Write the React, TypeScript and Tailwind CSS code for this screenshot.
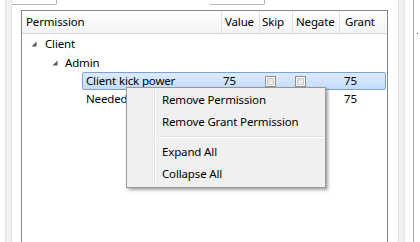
import React from "react";

const font = { fontFamily: '"Noto Sans", "Open Sans", sans-serif' };

function Tri() {
  return (
    <svg width="6" height="6" viewBox="0 0 6 6" className="shrink-0">
      <polygon points="0.5,5.5 5.5,5.5 5.5,0.5" fill="#5a5a5a" />
    </svg>
  );
}

function Check() {
  return (
    <div className="w-[11px] h-[11px] border border-[#8f8f8f] bg-white p-[1px]">
      <div className="w-full h-full bg-gradient-to-br from-[#dcdcdc] to-[#f6f6f6] border border-[#c8c8c8]" />
    </div>
  );
}

export default function App() {
  return (
    <div
      className="w-[420px] h-[242px] overflow-hidden bg-white flex text-[11.5px] tracking-[-0.15px] text-black relative"
      style={font}
    >
      {/* left strip */}
      <div className="w-[5px] shrink-0" />
      <div className="w-[7px] shrink-0 bg-[#f0f0f0] border-l border-r border-[#e4e4e4]" />
      {/* center */}
      <div className="w-[386px] shrink-0 flex flex-col">
        <div className="h-[10px] flex items-start shrink-0">
          <div className="w-[45px] h-[5px] border-b border-r border-[#b5b5b5] rounded-br-[2px]" />
          <div className="ml-[153px] w-[55px] h-[5px] border-b border-r border-[#b5b5b5] rounded-br-[2px]" />
        </div>
        <div className="ml-[9px] w-[367px] flex-1 border border-[#828790] border-b-0 bg-white flex flex-col">
          {/* header */}
          <div className="h-[23px] flex shrink-0 bg-gradient-to-b from-white to-[#f2f3f5] border-b border-[#d5d5d5]">
            <div className="w-[200px] pl-[4px] flex items-center border-r border-[#e2e2e2]">Permission</div>
            <div className="w-[38px] pl-[3px] flex items-center border-r border-[#e2e2e2]">Value</div>
            <div className="w-[33px] pl-[2px] flex items-center border-r border-[#e2e2e2]">Skip</div>
            <div className="w-[47px] pl-[3px] flex items-center border-r border-[#e2e2e2]">Negate</div>
            <div className="flex-1 pl-[5px] flex items-center">Grant</div>
          </div>
          {/* rows */}
          <div className="h-[19px] flex items-center pl-[9px] gap-[8px]">
            <Tri />
            <span>Client</span>
          </div>
          <div className="h-[19px] flex items-center pl-[30px] gap-[7px]">
            <Tri />
            <span>Admin</span>
          </div>
          <div className="h-[18px] ml-[60px] mr-[1px] flex items-center border border-[#7da2ce] rounded-[2px] bg-gradient-to-b from-[#dcebfc] to-[#c4dcfb]">
            <div className="w-[139px] pl-[3px]">Client kick power</div>
            <div className="w-[38px] pl-[1px]">75</div>
            <div className="w-[33px] pl-[5px]"><Check /></div>
            <div className="w-[47px] pl-[2px]"><Check /></div>
            <div className="flex-1 pl-[4px]">75</div>
          </div>
          <div className="h-[18px] ml-[60px] flex items-center border border-transparent">
            <div className="w-[139px] pl-[3px]">
              <div className="w-[40px] overflow-hidden whitespace-nowrap">Needed</div>
            </div>
            <div className="w-[38px]" />
            <div className="w-[33px]" />
            <div className="w-[47px]" />
            <div className="flex-1 pl-[4px]">75</div>
          </div>
        </div>
      </div>
      {/* right strip */}
      <div className="w-[7px] shrink-0 bg-[#f0f0f0] border-l border-r border-[#e4e4e4]" />
      <div className="w-[9px] shrink-0 border-r border-[#a9a9a9]" />
      <div className="flex-1 relative">
        <div className="absolute left-[3px] top-[33px] w-[1px] h-[1px] bg-[#555]" />
      </div>

      {/* context menu */}
      <div className="absolute left-[126px] top-[87px] w-[200px] h-[101px] bg-[#f0f0f0] border border-[#979797] shadow-[2px_2px_3px_rgba(0,0,0,0.35)] flex">
        <div className="w-[28px] shrink-0 border-r border-[#e2e3e3]" />
        <div className="w-[1px] shrink-0 bg-white" />
        <div className="flex-1 flex flex-col pt-[1px]">
          <div className="h-[22px] flex items-center pl-[6px]">Remove Permission</div>
          <div className="h-[22px] flex items-center pl-[6px]">Remove Grant Permission</div>
          <div className="h-[8px] flex flex-col justify-center pl-[2px] pr-[1px]">
            <div className="h-[1px] bg-[#e0e0e0]" />
            <div className="h-[1px] bg-white" />
          </div>
          <div className="h-[22px] flex items-center pl-[6px]">Expand All</div>
          <div className="h-[22px] flex items-center pl-[6px]">Collapse All</div>
        </div>
      </div>
    </div>
  );
}
